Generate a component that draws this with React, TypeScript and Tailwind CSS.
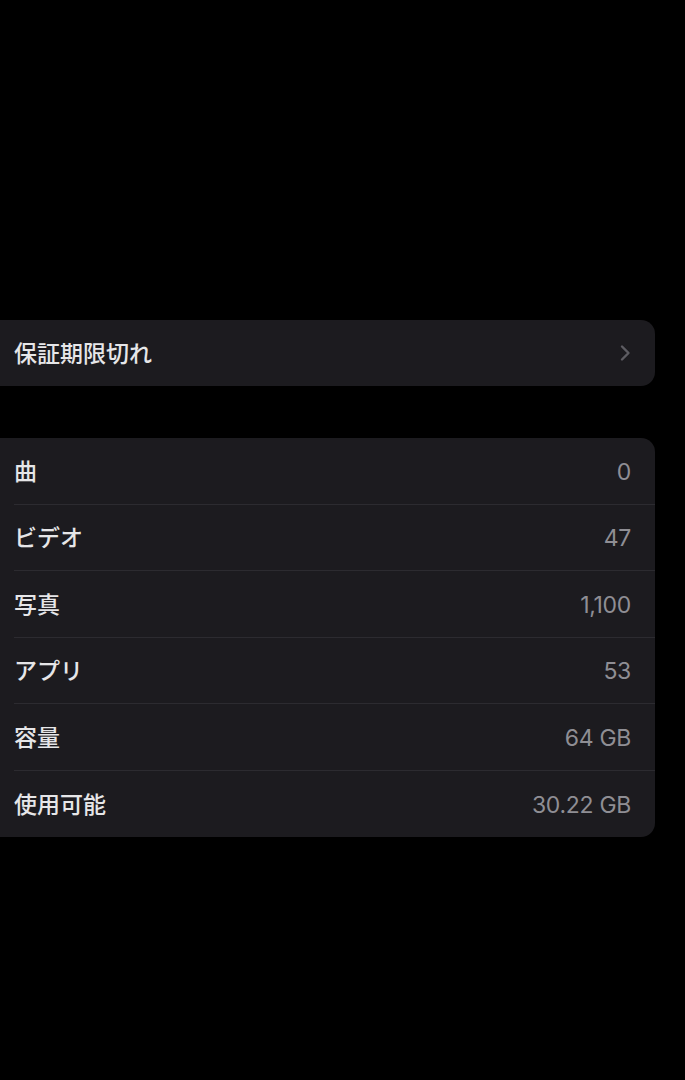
const rows: { label: string; value: string }[] = [
  { label: "曲", value: "0" },
  { label: "ビデオ", value: "47" },
  { label: "写真", value: "1,100" },
  { label: "アプリ", value: "53" },
  { label: "容量", value: "64 GB" },
  { label: "使用可能", value: "30.22 GB" },
];

const font = {
  fontFamily: '"Inter", "Noto Sans CJK JP", sans-serif',
};

export default function App() {
  return (
    <div
      className="min-h-[1080px] w-full bg-black pt-[320px] overflow-hidden"
      style={font}
    >
      {/* warranty row */}
      <div className="ml-[-20px] mr-[30px] flex h-[66px] items-center justify-between rounded-[14px] bg-[#1c1b1f] pl-[34px] pr-[24px]">
        <span className="mt-[2px] text-[23px] font-medium text-[#e6e6e8]">保証期限切れ</span>
        <svg width="12" height="18" viewBox="0 0 12 18" fill="none">
          <path
            d="M3 2.5 L9.5 9 L3 15.5"
            stroke="#5d5c62"
            strokeWidth="2.4"
            strokeLinecap="round"
            strokeLinejoin="round"
          />
        </svg>
      </div>

      {/* device info list */}
      <div className="ml-[-20px] mr-[30px] mt-[52px] rounded-[14px] bg-[#1c1b1f] pl-[34px]">
        {rows.map((r, i) => (
          <div
            key={r.label}
            className={`flex h-[66.5px] items-center justify-between pr-[24px] ${
              i < rows.length - 1 ? "border-b border-[#2c2b30]" : ""
            }`}
          >
            <span className="mt-[2px] text-[23px] font-medium text-[#e6e6e8]">{r.label}</span>
            <span className="mt-[2px] text-[23px] tracking-[-0.3px] text-[#8f8e94]">{r.value}</span>
          </div>
        ))}
      </div>
    </div>
  );
}
